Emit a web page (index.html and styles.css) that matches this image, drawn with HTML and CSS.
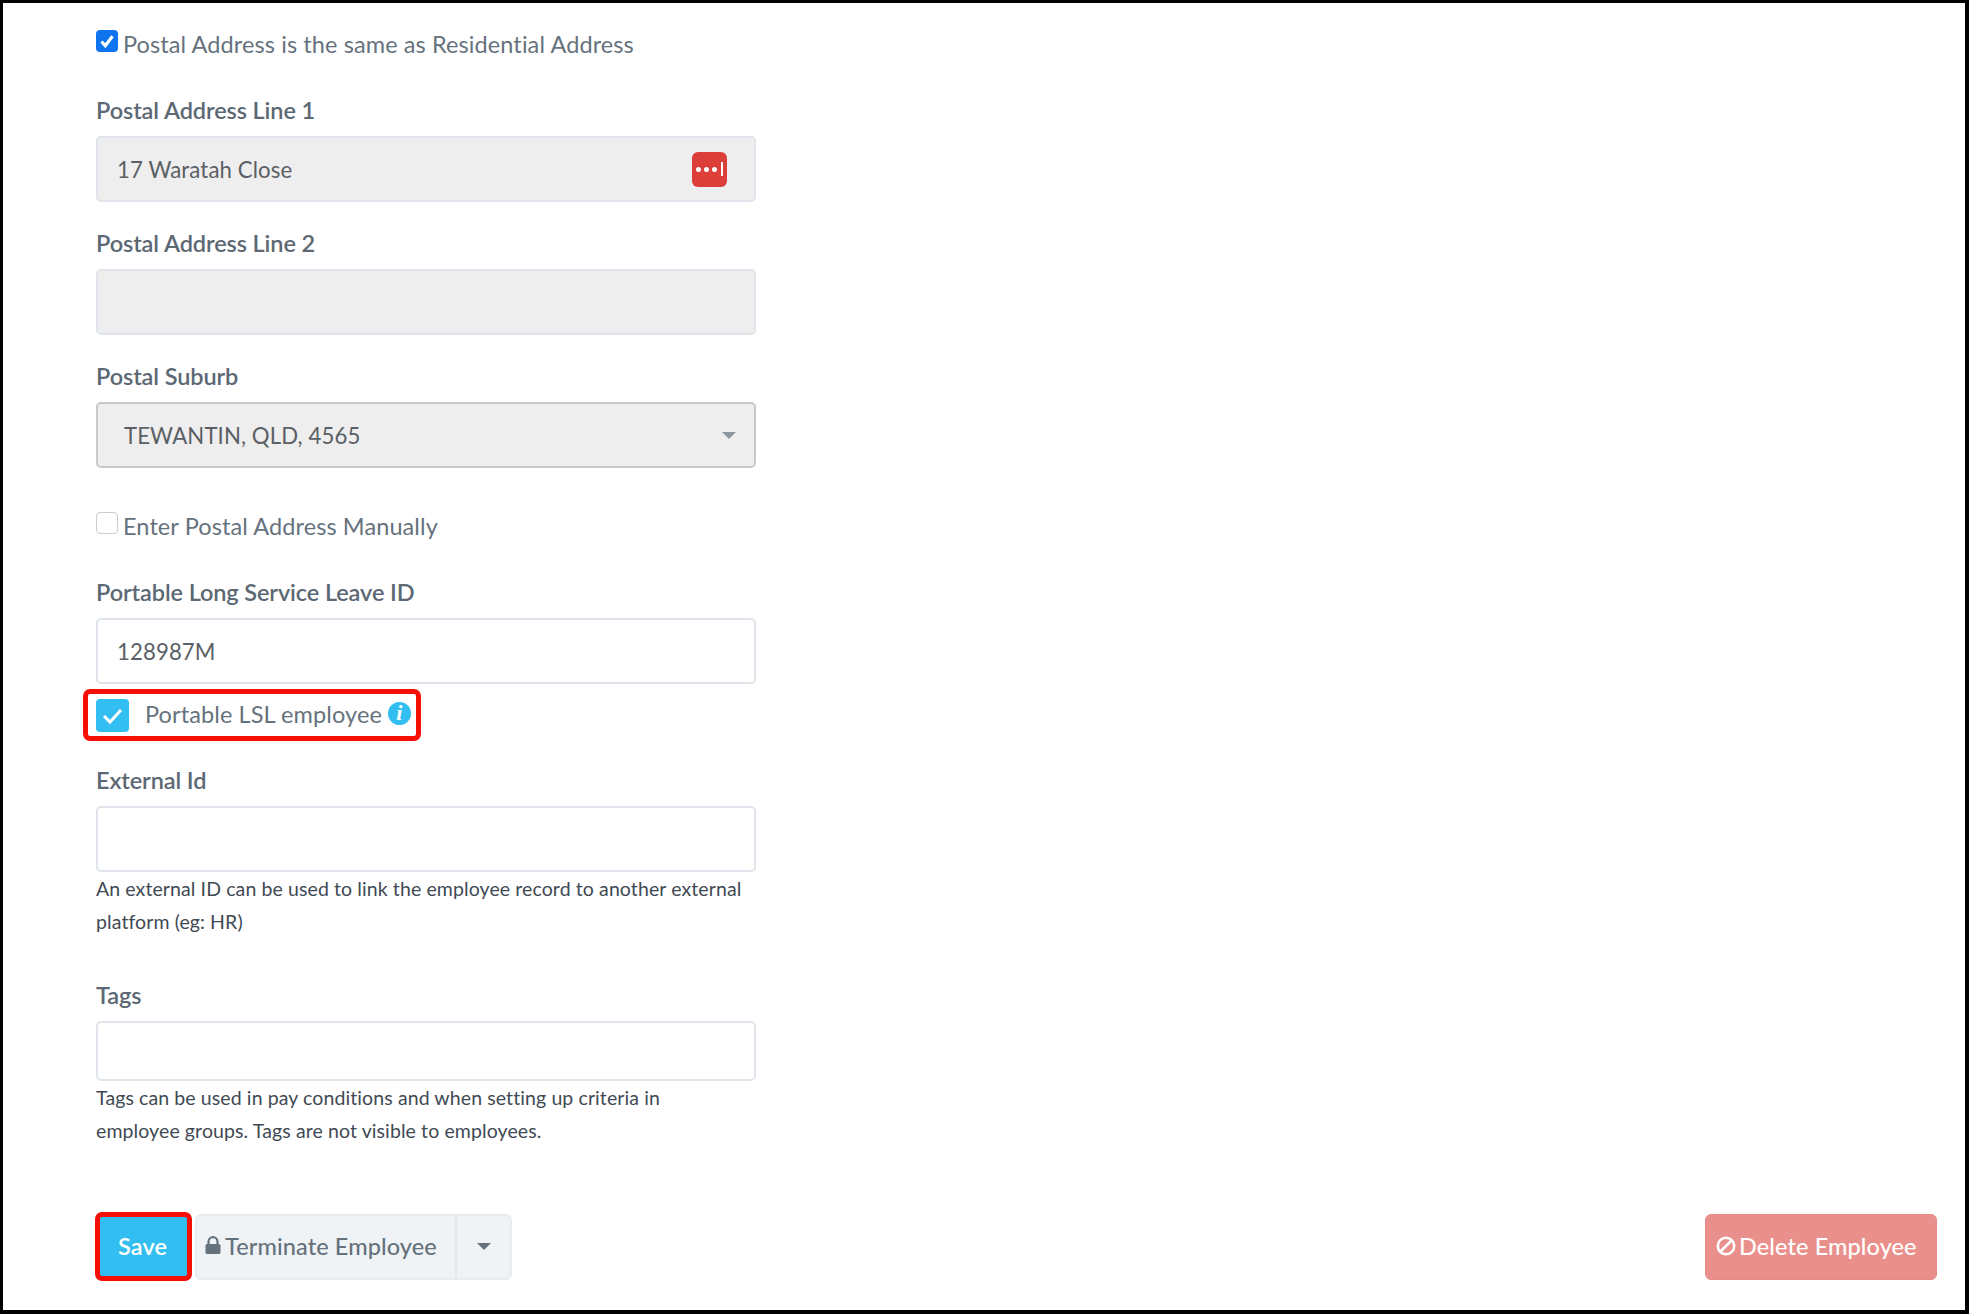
FILE: index.html
```html
<!DOCTYPE html>
<html lang="en">
<head>
<meta charset="utf-8">
<title>Employee</title>
<link rel="stylesheet" href="styles.css">
</head>
<body>
<main class="page">
  <form class="form">
    <label class="check check-first">
      <span class="native native-on"><svg viewBox="0 0 22 22" width="22" height="22"><path d="M5.5 11.5l3.8 4.2 7.2-9.4" fill="none" stroke="#fff" stroke-width="3.2"/></svg></span>
      <span>Postal Address is the same as Residential Address</span>
    </label>

    <div class="group group-first">
      <div class="label">Postal Address Line 1</div>
      <div class="input disabled">
        <span>17 Waratah Close</span>
        <span class="lastpass"><i></i><i></i><i></i><b></b></span>
      </div>
    </div>
    <div class="group">
      <div class="label">Postal Address Line 2</div>
      <div class="input disabled"></div>
    </div>
    <div class="group">
      <div class="label">Postal Suburb</div>
      <div class="input select"><span>TEWANTIN, QLD, 4565</span><span class="caret"></span></div>
    </div>

    <label class="check check-manual">
      <span class="native"></span>
      <span>Enter Postal Address Manually</span>
    </label>

    <div class="group group-lsl">
      <div class="label">Portable Long Service Leave ID</div>
      <div class="input">128987M</div>
    </div>
    <div class="highlight-row">
      <span class="pretty"><svg viewBox="0 0 33 33" width="33" height="33"><path d="M8 17l6 6 11-12" fill="none" stroke="#fff" stroke-width="3"/></svg></span>
      <span class="pretty-text">Portable LSL employee</span>
      <span class="info">i</span>
    </div>

    <div class="group group-ext">
      <div class="label">External Id</div>
      <div class="input"></div>
      <p class="help">An external ID can be used to link the employee record to another external platform (eg: HR)</p>
    </div>
    <div class="group group-tags">
      <div class="label">Tags</div>
      <div class="input input-tags"></div>
      <p class="help">Tags can be used in pay conditions and when setting up criteria in employee groups. Tags are not visible to employees.</p>
    </div>
  </form>

  <div class="actions">
    <div class="actions-left">
      <button type="button" class="btn-save">Save</button>
      <div class="split">
        <button type="button" class="btn-term">
          <svg viewBox="0 0 16 18" width="16" height="19"><path d="M3.5 8V5.2a4.5 4.5 0 0 1 9 0V8" fill="none" stroke="#65717c" stroke-width="2.2"/><rect x="0.5" y="7.5" width="15" height="10" rx="1.5" fill="#65717c"/></svg>
          Terminate Employee
        </button>
        <button type="button" class="btn-drop" aria-label="More"><span class="caret caret-dark"></span></button>
      </div>
    </div>
    <button type="button" class="btn-del">
      <svg viewBox="0 0 20 20" width="20" height="20"><circle cx="10" cy="10" r="8.2" fill="none" stroke="#fff" stroke-width="2.6"/><path d="M4.5 15.5L15.5 4.5" stroke="#fff" stroke-width="2.6"/></svg>
      Delete Employee
    </button>
  </div>
</main>
</body>
</html>
```
FILE: styles.css
```css
* { box-sizing: border-box; }
html, body { margin: 0; padding: 0; }
body {
  width: 1969px;
  height: 1314px;
  background: #000;
  font-family: Lato, "Liberation Sans", sans-serif;
  font-size: 23.5px;
  letter-spacing: 0.1px;
  color: #66727d;
  overflow: hidden;
}
.page {
  margin: 3px 0 0 3px;
  width: 1962px;
  height: 1307px;
  background: #fff;
  padding: 27px 28px 0 93px;
  display: flex;
  flex-direction: column;
}
.form { width: 660px; flex: 1; }

.check { display: flex; align-items: flex-start; gap: 5px; line-height: 28px; }
.check-first { height: 30px; }
.native {
  width: 22px; height: 22px; border-radius: 4px; flex: none;
  background: #fff; border: 1px solid #c9cdd1;
}
.native-on { background: #0f74f0; border: 0; }
.native svg { display: block; }
.check-manual { margin-top: 44px; height: 30px; }

.group { margin-top: 27px; }
.group-first { margin-top: 36px; }
.group-lsl { margin-top: 36px; }
.group-ext { margin-top: 25px; }
.group-tags { margin-top: 43px; }
.label { font-weight: 600; line-height: 28px; margin-bottom: 12px; color: #5c6873; letter-spacing: -0.1px; }

.input {
  height: 66px; border: 2px solid #dfe5ea; border-radius: 5px;
  background: #fff; padding: 0 19px;
  display: flex; align-items: center; justify-content: space-between;
  color: #5a6065; font-size: 22.2px;
}
.disabled { background: #eee; }
.select { background: #eee; border-color: #c6cacd; padding: 0 18px 0 26px; }
.input-tags { height: 60px; }

.lastpass {
  width: 35px; height: 35px; border-radius: 6px; background: #dc3e3a; margin-right: 8px;
  display: flex; align-items: center; justify-content: center; gap: 3px;
}
.lastpass i { width: 5px; height: 5px; border-radius: 50%; background: #fff; }
.lastpass b { width: 2px; height: 14px; background: #fff; margin-left: 1px; }

.caret { width: 0; height: 0; border-left: 7px solid transparent; border-right: 7px solid transparent; border-top: 7px solid #8f979e; }
.caret-dark { display: block; border-top-color: #65717c; margin: 0 auto; }

.highlight-row {
  display: flex; align-items: center;
  width: 338px; height: 52px;
  margin: 5px 0 0 -13px; padding-left: 8px;
  border: 5px solid #f50f05; border-radius: 7px;
}
.pretty { width: 33px; height: 33px; border-radius: 4px; background: #32bef0; flex: none; }
.pretty svg { display: block; }
.pretty-text { margin-left: 16px; margin-top: -3px; }
.info {
  width: 23px; height: 23px; border-radius: 50%; background: #32bef0; color: #fff;
  margin-left: 6px; margin-top: -4px;
  display: flex; align-items: center; justify-content: center;
  font: italic 700 22px/1 "Liberation Serif", serif;
}
.help { margin: 0; max-width: 650px; font-size: 19.5px; line-height: 33px; color: #3f4a54; }

.actions { display: flex; justify-content: space-between; align-items: center; height: 69px; margin-bottom: 29px; }
.actions-left { display: flex; align-items: center; gap: 3px; margin-left: -1px; }
button { font: inherit; letter-spacing: inherit; cursor: pointer; }
.btn-save {
  width: 97px; height: 69px; background: #32bef0; color: #fff; font-weight: 600;
  border: 5px solid #f50f05; border-radius: 7px; padding: 0 2px 2px 0;
}
.split { display: flex; height: 66px; border: 2px solid #e8ecf0; border-radius: 6px; background: #f0f3f6; }
.btn-term {
  width: 260px; border: 0; border-right: 2px solid #e4e8ec; background: none; color: #65717c; padding: 0 0 2px 8px;
  display: flex; align-items: center; gap: 4px; font-weight: 500;
}
.btn-drop { width: 53px; border: 0; background: none; padding: 0; }
.btn-del {
  width: 232px; height: 66px; background: #ea908c; color: #fff; border: 1px solid #e88a86; border-radius: 6px;
  display: flex; align-items: center; gap: 3px; padding: 0 0 2px 10px; font-weight: 500;
}
```
